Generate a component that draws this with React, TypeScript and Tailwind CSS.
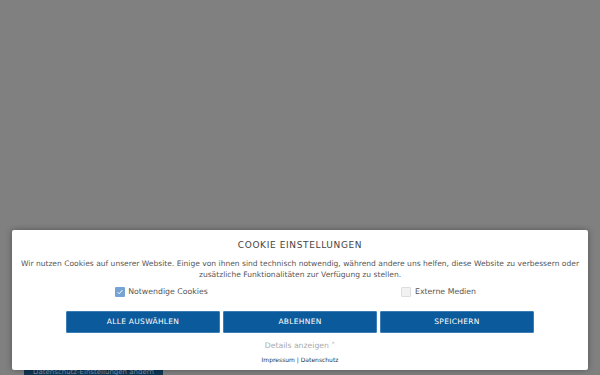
import React from 'react';

const App = () => {
  const buttons = ['Alle auswählen', 'Ablehnen', 'Speichern'];

  return (
    <div className="relative h-[375px] w-[600px] overflow-hidden bg-[#808080] font-['DejaVu_Sans',sans-serif]">
      {/* page content behind the overlay */}
      <div className="flex h-full flex-col justify-end px-6">
        <div className="-mb-[4px] flex h-[12px] w-[139px] items-start justify-center bg-[#0e3654] pt-[2px] text-[7px] leading-none text-[#7f95a8]">
          Datenschutz-Einstellungen ändern
        </div>
      </div>

      {/* Cookie dialog */}
      <div className="absolute left-3 top-[230px] w-[576px] rounded-[2px] bg-white px-[6px] pt-[9px] pb-[6px] text-center shadow-[0_0_6px_rgba(0,0,0,0.35)]">
        <h2 className="text-[9px] leading-[12px] tracking-[0.07em] text-[#444]">COOKIE EINSTELLUNGEN</h2>

        <p className="mt-[7px] text-[7.55px] leading-[11px] text-[#555]">
          Wir nutzen Cookies auf unserer Website. Einige von ihnen sind technisch notwendig, während andere uns helfen, diese Website zu verbessern oder zusätzliche Funktionalitäten zur Verfügung zu stellen.
        </p>

        <div className="mt-[6px] grid grid-cols-2 px-[5px] text-[7.8px] leading-[11px] text-[#555]">
          <label className="flex items-center justify-center gap-[3px]">
            <span className="flex h-[10px] w-[10px] items-center justify-center rounded-[1px] bg-[#76a3d3]">
              <svg viewBox="0 0 10 10" className="h-[8px] w-[8px]">
                <path d="M2 5.2 L4 7.2 L8 2.6" fill="none" stroke="white" strokeWidth="1.2" />
              </svg>
            </span>
            Notwendige Cookies
          </label>
          <label className="flex items-center justify-center gap-[4px]">
            <span className="h-[10px] w-[10px] rounded-[1px] border border-[#ddd] bg-[#f2f2f2]" />
            Externe Medien
          </label>
        </div>

        <div className="mt-[14px] flex justify-center gap-[3px]">
          {buttons.map((b) => (
            <button
              key={b}
              className="h-[22px] w-[154px] rounded-[1px] border border-[#3d7db5] bg-[#0b5a9c] text-[7.5px] uppercase tracking-[0.04em] text-white"
            >
              {b}
            </button>
          ))}
        </div>

        <div className="mt-[7px] text-[7.7px] leading-[11px] text-[#aaa]">Details anzeigen ˄</div>
        <div className="mt-[4px] text-[6px] leading-[9px] text-[#333]">Impressum | Datenschutz</div>
      </div>
    </div>
  );
};

export default App;
